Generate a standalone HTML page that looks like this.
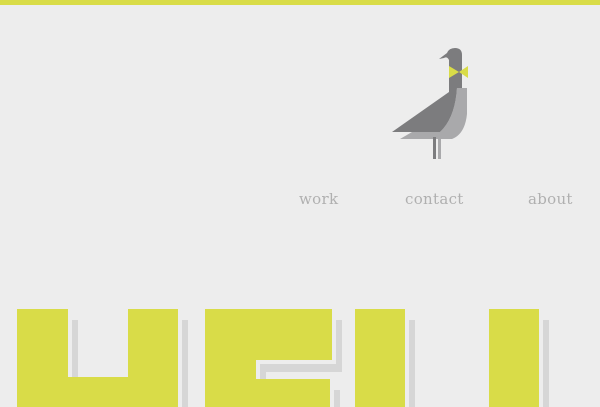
<!DOCTYPE html>
<html><head><style>
html,body{margin:0;padding:0;width:600px;height:407px;overflow:hidden;background:#ededed;position:relative}
.bar{position:absolute;top:0;left:0;width:600px;height:5px;background:#d9dc48}
.y{position:absolute;background:#d9dc48}
.s{position:absolute;background:#d6d6d6}
.n{position:absolute;top:189px;font-family:"DejaVu Serif","Liberation Serif",serif;font-size:15px;color:#b0b0b0;line-height:20px;letter-spacing:0.3px}
</style></head><body>
<div class="bar"></div>
<svg style="position:absolute;left:0;top:0" width="600" height="407">
<path d="M457,88 L467,88 L467,114 Q465,134 452,139 L400,139 L412,132 L440,132 Q455,118 457,88 Z" fill="#a9a9ab"/>
<path d="M439,59 L447,53 Q449,48 455,48 Q462,48 462,55 L462,88 L457,88 Q455,118 440,132 L392,132 L449,92 L449,60 Q447,56 444,58 Z" fill="#7c7c7e"/>
<rect x="433" y="137" width="3" height="22" fill="#7c7c7e"/>
<rect x="438" y="137" width="3" height="22" fill="#a9a9ab"/>
<polygon points="449,66 459,72 449,78" fill="#d9dc48"/>
<polygon points="468,66 459,72 468,78" fill="#d9dc48"/>
</svg>
<div class="n" style="left:299px">work</div>
<div class="n" style="left:405px">contact</div>
<div class="n" style="left:528px">about</div>
<div class="s" style="left:72px;top:320px;width:6px;height:87px"></div>
<div class="s" style="left:182px;top:320px;width:6px;height:87px"></div>
<div class="y" style="left:17px;top:309px;width:51px;height:98px"></div>
<div class="y" style="left:128px;top:309px;width:50px;height:98px"></div>
<div class="y" style="left:17px;top:377px;width:161px;height:30px"></div>
<div class="s" style="left:336px;top:320px;width:6px;height:52px"></div>
<div class="s" style="left:260px;top:364px;width:82px;height:8px"></div>
<div class="s" style="left:260px;top:364px;width:6px;height:15px"></div>
<div class="s" style="left:334px;top:390px;width:6px;height:17px"></div>
<div class="y" style="left:205px;top:309px;width:127px;height:51px"></div>
<div class="y" style="left:205px;top:309px;width:51px;height:98px"></div>
<div class="y" style="left:205px;top:379px;width:125px;height:28px"></div>
<div class="s" style="left:409px;top:320px;width:6px;height:87px"></div>
<div class="y" style="left:355px;top:309px;width:50px;height:98px"></div>
<div class="s" style="left:543px;top:320px;width:6px;height:87px"></div>
<div class="y" style="left:489px;top:309px;width:50px;height:98px"></div>
</body></html>
